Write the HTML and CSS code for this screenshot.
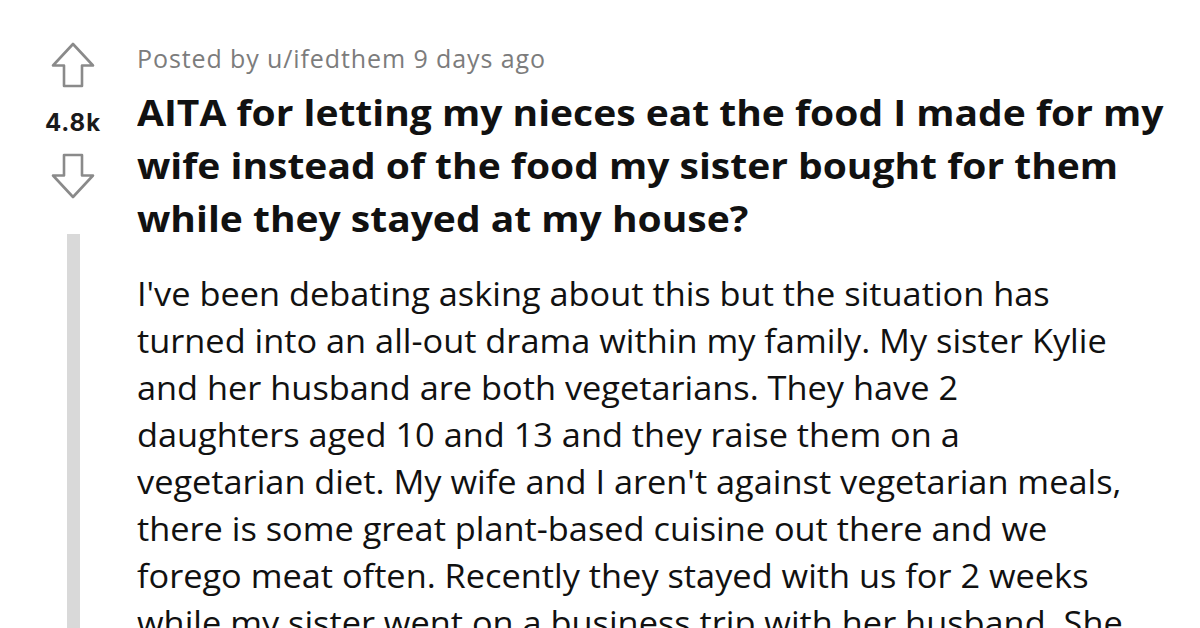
FILE: index.html
```html
<!DOCTYPE html>
<html>
<head>
<meta charset="utf-8">
<link rel="stylesheet" href="styles.css">
</head>
<body>
<div class="post">
  <div class="votes">
    <svg class="arrow up" width="46" height="48" viewBox="0 0 46 48">
      <path d="M23 2 L43 23.5 L32 23.5 L32 44 L14 44 L14 23.5 L3 23.5 Z" fill="none" stroke="#8a8a8a" stroke-width="2.6" stroke-linejoin="round"/>
    </svg>
    <div class="score">4.8k</div>
    <svg class="arrow down" width="46" height="48" viewBox="0 0 46 48">
      <path d="M23 46 L43 24.5 L32 24.5 L32 4 L14 4 L14 24.5 L3 24.5 Z" fill="none" stroke="#8a8a8a" stroke-width="2.6" stroke-linejoin="round"/>
    </svg>
    <div class="thread-line"></div>
  </div>
  <div class="content">
    <div class="meta">Posted by u/ifedthem 9 days ago</div>
    <h1 class="title">AITA for letting my nieces eat the food I made for my<br>wife instead of the food my sister bought for them<br>while they stayed at my house?</h1>
    <p class="body-text">I've been debating asking about this but the situation has<br>turned into an all-out drama within my family. My sister Kylie<br>and her husband are both vegetarians. They have 2<br>daughters aged 10 and 13 and they raise them on a<br>vegetarian diet. My wife and I aren't against vegetarian meals,<br>there is some great plant-based cuisine out there and we<br>forego meat often. Recently they stayed with us for 2 weeks<br>while my sister went on a business trip with her husband. She</p>
  </div>
</div>
</body>
</html>
```
FILE: styles.css
```css
html, body {
  margin: 0;
  padding: 0;
  background: #ffffff;
  overflow: hidden;
}
body {
  width: 1200px;
  height: 628px;
}
.post {
  display: flex;
  flex-direction: row;
  height: 628px;
}
.votes {
  width: 128px;
  padding-left: 9px;
  display: flex;
  flex-direction: column;
  align-items: center;
  flex-shrink: 0;
}
.arrow {
  display: block;
}
.arrow.up {
  margin-top: 42px;
}
.score {
  font-family: "Inter", "Liberation Sans", sans-serif;
  font-weight: 700;
  font-size: 24px;
  color: #1a1a1b;
  margin-top: 19px;
  line-height: 28px;
  letter-spacing: 0.9px;
}
.arrow.down {
  margin-top: 14px;
}
.thread-line {
  width: 13px;
  background: #d9d9d9;
  margin-top: 35px;
  flex: 1;
}
.content {
  flex: 1;
  min-width: 0;
  overflow: hidden;
}
.meta {
  font-family: "Open Sans", "Noto Sans", sans-serif;
  font-size: 25px;
  letter-spacing: 0.9px;
  color: #7c7c7c;
  margin-top: 40px;
  line-height: 36px;
}
.title {
  font-family: "Open Sans", "Noto Sans", sans-serif;
  font-weight: 700;
  font-size: 36px;
  line-height: 53px;
  color: #111111;
  margin: 10px 0 0 0;
  white-space: nowrap;
  transform: scaleX(1.083);
  transform-origin: left top;
}
.body-text {
  font-family: "Open Sans", "Noto Sans", sans-serif;
  font-size: 33px;
  line-height: 47px;
  color: #111111;
  margin: 25px 0 0 0;
  white-space: nowrap;
  transform: scaleX(1.04);
  transform-origin: left top;
}
```
